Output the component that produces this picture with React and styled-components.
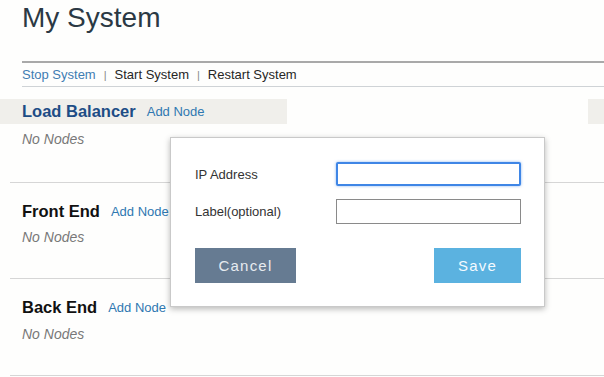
import React from "react";
import styled, { createGlobalStyle } from "styled-components";

const Global = createGlobalStyle`
  html, body { margin: 0; padding: 0; background: #fefefd; }
  body { font-family: "Liberation Sans", Arial, Helvetica, sans-serif; color: #222; }
  * { box-sizing: border-box; }
`;

const Page = styled.div`
  position: relative;
  width: 604px;
  height: 377px;
  overflow: hidden;
`;

const Title = styled.h1`
  margin: 0 0 0 22px;
  padding-top: 2px;
  font-size: 28px;
  line-height: 32px;
  font-weight: 400;
  color: #2b3944;
  height: 61px;
`;

const Toolbar = styled.nav`
  margin-left: 22px;
  border-top: 2px solid #a9a9a9;
  border-bottom: 1px solid #cfd3d6;
  height: 26px;
  display: flex;
  align-items: center;
  gap: 7px;
  font-size: 13px;
  color: #222;
`;

const ToolLink = styled.span`
  color: ${(p) => (p.$active ? "#3f7db3" : "#262626")};
`;

const Sep = styled.span`
  color: #888;
  font-size: 11px;
  padding: 0 1px;
`;

const Sections = styled.div`
  margin-top: 12px;
`;

const HeadRow = styled.div`
  display: flex;
  justify-content: space-between;
  height: ${(p) => p.$h}px;
  margin-top: ${(p) => p.$mt || 0}px;
`;

const HeadBar = styled.div`
  display: flex;
  align-items: center;
  gap: 11px;
  width: 287px;
  padding-left: 22px;
  background: ${(p) => (p.$hl ? "#f0efeb" : "transparent")};
`;

const Stub = styled.div`
  width: 16px;
  background: ${(p) => (p.$hl ? "#f0efeb" : "transparent")};
`;

const SectionName = styled.h2`
  margin: 0;
  font-size: 16.5px;
  font-weight: 700;
  color: ${(p) => p.$color};
`;

const AddLink = styled.span`
  font-size: 13px;
  color: #2f78b1;
`;

const Empty = styled.div`
  margin-top: ${(p) => p.$mt}px;
  padding-left: 22px;
  font-size: 14px;
  line-height: 18px;
  font-style: italic;
  color: #787878;
`;

const Divider = styled.div`
  margin-left: 10px;
  margin-top: ${(p) => p.$mt}px;
  border-top: 1px solid #d6d6d6;
`;

const Modal = styled.div`
  position: absolute;
  left: 170px;
  top: 137px;
  width: 375px;
  height: 170px;
  background: #fff;
  border: 1px solid #c9c9c9;
  box-shadow: 0 2px 6px rgba(0, 0, 0, 0.28);
  padding: 24px 23px 23px 24px;
  display: flex;
  flex-direction: column;
`;

const Form = styled.div`
  display: grid;
  grid-template-columns: 141px 185px;
  grid-template-rows: 24px 25px;
  row-gap: 13px;
  align-items: center;
`;

const Label = styled.label`
  font-size: 13px;
  color: #333;
`;

const Input = styled.div`
  height: 100%;
  background: #fff;
  border: ${(p) => (p.$focus ? "2px solid #3f86e6" : "1px solid #8a8a8a")};
  box-shadow: ${(p) => (p.$focus ? "0 0 3px rgba(63,134,230,0.6)" : "none")};
  border-radius: ${(p) => (p.$focus ? "2px" : "0")};
`;

const Buttons = styled.div`
  margin-top: 24px;
  display: flex;
  justify-content: space-between;
`;

const Button = styled.button`
  width: ${(p) => p.$w}px;
  height: 35px;
  border: none;
  border-radius: 0;
  background: ${(p) => p.$bg};
  color: ${(p) => p.$fg};
  font-family: "Liberation Sans", Arial, sans-serif;
  font-size: 15px;
  letter-spacing: 1.2px;
  padding: 0;
`;

export default function App() {
  return (
    <Page>
      <Global />
      <Title>My System</Title>
      <Toolbar>
        <ToolLink $active>Stop System</ToolLink>
        <Sep>|</Sep>
        <ToolLink>Start System</ToolLink>
        <Sep>|</Sep>
        <ToolLink>Restart System</ToolLink>
      </Toolbar>
      <Sections>
        <HeadRow $h={25}>
          <HeadBar $hl>
            <SectionName $color="#1e4d86">Load Balancer</SectionName>
            <AddLink>Add Node</AddLink>
          </HeadBar>
          <Stub $hl />
        </HeadRow>
        <Empty $mt={6}>No Nodes</Empty>
        <Divider $mt={34} />

        <HeadRow $h={26} $mt={15}>
          <HeadBar>
            <SectionName $color="#111">Front End</SectionName>
            <AddLink>Add Node</AddLink>
          </HeadBar>
        </HeadRow>
        <Empty $mt={4}>No Nodes</Empty>
        <Divider $mt={32} />

        <HeadRow $h={26} $mt={15}>
          <HeadBar>
            <SectionName $color="#111">Back End</SectionName>
            <AddLink>Add Node</AddLink>
          </HeadBar>
        </HeadRow>
        <Empty $mt={5}>No Nodes</Empty>
        <Divider $mt={32} />
      </Sections>

      <Modal>
        <Form>
          <Label>IP Address</Label>
          <Input $focus />
          <Label>Label(optional)</Label>
          <Input />
        </Form>
        <Buttons>
          <Button $w={101} $bg="#667b92" $fg="#e6ebf0">Cancel</Button>
          <Button $w={87} $bg="#5bb2e0" $fg="#f4faff">Save</Button>
        </Buttons>
      </Modal>
    </Page>
  );
}
